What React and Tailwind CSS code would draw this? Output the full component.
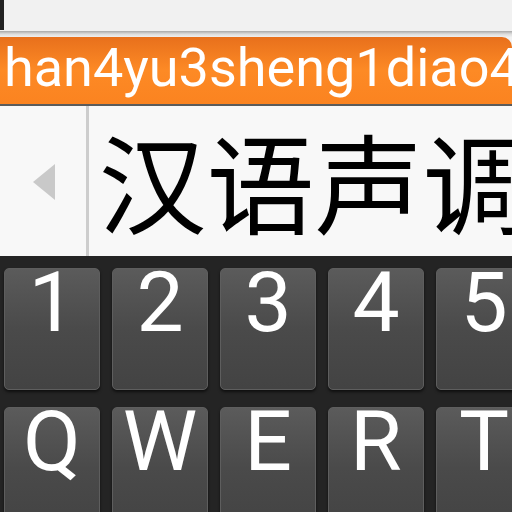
import React from "react";

function Key({ label }) {
  return (
    <div className="w-[96px] h-[122px] shrink-0 rounded-[5px] border border-[#5e5e5e] bg-gradient-to-b from-[#5b5b5b] via-[#4a4a4a] to-[#434343] shadow-[0_2px_3px_rgba(0,0,0,0.6)] flex justify-center items-start">
      <span className="text-white text-[84px] leading-[68px]" style={{ fontFamily: "Roboto, 'Noto Sans', sans-serif" }}>
        {label}
      </span>
    </div>
  );
}

export default function App() {
  return (
    <div className="w-[512px] h-[512px] overflow-hidden flex flex-col bg-[#f2f2f2]">
      <div className="h-[31px] shrink-0 bg-[#f1f1f1] flex">
        <div className="w-[4px] h-[30px] bg-[#222222]" />
      </div>
      <div className="h-[6px] shrink-0 bg-gradient-to-b from-[#a9a9a9] via-[#dcdcdc] to-[#f0f0f0]" />
      <div className="h-[67px] shrink-0 rounded-tr-[10px] bg-gradient-to-b from-[#e8701c] via-[#fd8a25] to-[#fb8320] flex items-center overflow-hidden whitespace-nowrap">
        <span className="text-white text-[54px] leading-none pl-[4px] -mt-[6px]" style={{ fontFamily: "Roboto, 'Noto Sans', sans-serif" }}>
          han4yu3sheng1diao4
        </span>
      </div>
      <div className="h-[2px] shrink-0 bg-[#5b5b5b]" />
      <div className="h-[150px] shrink-0 bg-[#f8f8f8] flex">
        <div className="w-[88px] flex items-center pl-[33px] pt-[2px]">
          <div className="w-0 h-0 border-t-[18px] border-b-[18px] border-r-[22px] border-t-transparent border-b-transparent border-r-[#c9c9c9]" />
        </div>
        <div className="w-[3px] bg-[#cdcdcd]" />
        <div className="flex items-center pl-[10px] whitespace-nowrap overflow-hidden">
          <span className="text-black text-[108px] leading-none -mt-[4px]" style={{ fontFamily: "'Noto Sans CJK SC', sans-serif" }}>
            汉语声调
          </span>
        </div>
      </div>
      <div className="flex-1 bg-[#242424] pt-[12px] pl-[4px] flex flex-col gap-[17px] overflow-hidden">
        <div className="flex gap-[12px]">
          {["1", "2", "3", "4", "5"].map((k) => (
            <Key key={k} label={k} />
          ))}
        </div>
        <div className="flex gap-[12px]">
          {["Q", "W", "E", "R", "T"].map((k) => (
            <Key key={k} label={k} />
          ))}
        </div>
      </div>
    </div>
  );
}
